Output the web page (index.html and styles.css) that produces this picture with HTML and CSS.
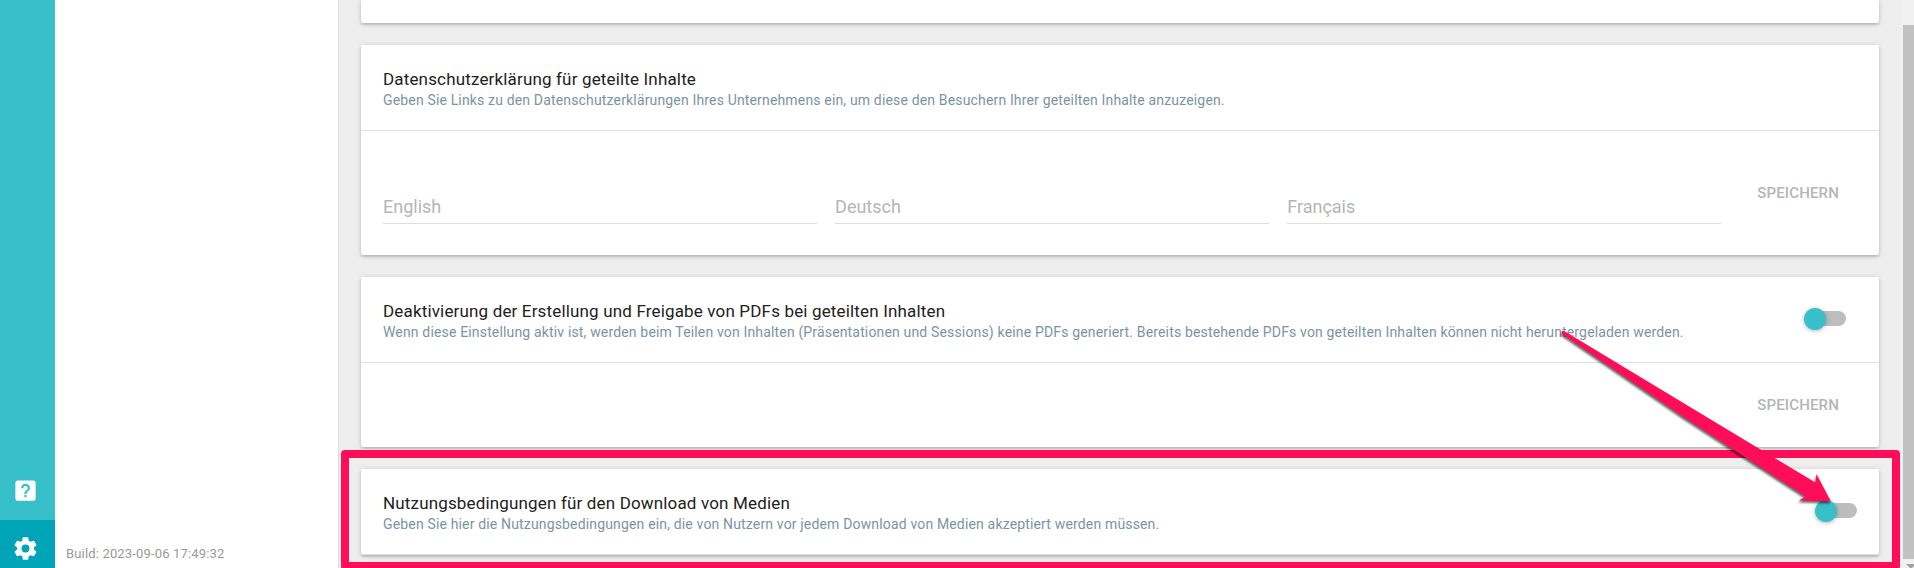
FILE: index.html
```html
<!DOCTYPE html>
<html lang="de">
<head>
<meta charset="utf-8">
<meta name="viewport" content="width=device-width, initial-scale=1">
<title>Einstellungen</title>
<link rel="stylesheet" href="styles.css">
</head>
<body>
<div class="app">
  <nav class="rail">
    <a class="rail-item" href="#hilfe" aria-label="Hilfe">
      <svg class="rail-icon" viewBox="0 0 24 24" aria-hidden="true"><path fill="currentColor" d="M11 18h2v-2h-2v2m1-12a4 4 0 0 0-4 4h2a2 2 0 0 1 2-2 2 2 0 0 1 2 2c0 2-3 1.750-3 5h2c0-2.250 3-2.500 3-5a4 4 0 0 0-4-4M5 3h14a2 2 0 0 1 2 2v14a2 2 0 0 1-2 2H5a2 2 0 0 1-2-2V5a2 2 0 0 1 2-2z" fill-rule="evenodd"/></svg>
    </a>
    <a class="rail-item rail-item-active" href="#einstellungen" aria-label="Einstellungen">
      <svg class="rail-icon" viewBox="0 0 24 24" aria-hidden="true"><path fill="currentColor" d="M12 15.500A3.500 3.500 0 0 1 8.500 12 3.500 3.500 0 0 1 12 8.500a3.500 3.500 0 0 1 3.500 3.500 3.500 3.500 0 0 1-3.500 3.500m7.430-2.530c.04-.32.07-.64.07-.97s-.03-.66-.07-1l2.110-1.630c.19-.15.24-.42.12-.64l-2-3.460c-.12-.22-.39-.31-.61-.22l-2.490 1c-.52-.39-1.060-.73-1.690-.98l-.37-2.650A.506.506 0 0 0 14 2h-4c-.25 0-.46.18-.5.42l-.37 2.650c-.63.25-1.170.59-1.690.98l-2.490-1c-.22-.09-.49 0-.61.22l-2 3.460c-.13.22-.07.49.12.64L4.570 11c-.04.34-.07.67-.07 1s.03.65.07.97l-2.110 1.660c-.19.15-.25.42-.12.64l2 3.460c.12.22.39.3.61.22l2.490-1.010c.52.4 1.060.74 1.690.99l.37 2.650c.04.24.25.42.5.42h4c.25 0 .46-.18.5-.42l.37-2.650c.63-.26 1.170-.59 1.690-.99l2.490 1.010c.22.08.49 0 .61-.22l2-3.460c.12-.22.07-.49-.12-.64l-2.110-1.660z"/></svg>
    </a>
  </nav>
  <aside class="panel">
    <p class="build">Build: 2023-09-06 17:49:32</p>
  </aside>
  <main class="content">
    <section class="card card-cut"></section>

    <section class="card">
      <header class="card-head">
        <div class="card-text">
          <h2 class="card-title">Datenschutzerklärung für geteilte Inhalte</h2>
          <p class="card-note">Geben Sie Links zu den Datenschutzerklärungen Ihres Unternehmens ein, um diese den Besuchern Ihrer geteilten Inhalte anzuzeigen.</p>
        </div>
      </header>
      <form class="card-body card-form">
        <div class="fields">
          <input class="field" type="text" placeholder="English" aria-label="English">
          <input class="field" type="text" placeholder="Deutsch" aria-label="Deutsch">
          <input class="field" type="text" placeholder="Français" aria-label="Français">
        </div>
        <button class="save" type="button" disabled>SPEICHERN</button>
      </form>
    </section>

    <section class="card">
      <header class="card-head">
        <div class="card-text">
          <h2 class="card-title" id="pdf-title">Deaktivierung der Erstellung und Freigabe von PDFs bei geteilten Inhalten</h2>
          <p class="card-note">Wenn diese Einstellung aktiv ist, werden beim Teilen von Inhalten (Präsentationen und Sessions) keine PDFs generiert. Bereits bestehende PDFs von geteilten Inhalten können nicht heruntergeladen werden.</p>
        </div>
        <input class="switch switch-inset" type="checkbox" role="switch" aria-labelledby="pdf-title">
      </header>
      <div class="card-body">
        <button class="save" type="button" disabled>SPEICHERN</button>
      </div>
    </section>

    <section class="card card-marked">
      <header class="card-head">
        <div class="card-text">
          <h2 class="card-title" id="terms-title">Nutzungsbedingungen für den Download von Medien</h2>
          <p class="card-note">Geben Sie hier die Nutzungsbedingungen ein, die von Nutzern vor jedem Download von Medien akzeptiert werden müssen.</p>
        </div>
        <input class="switch" type="checkbox" role="switch" aria-labelledby="terms-title">
      </header>
      <div class="marker"></div>
      <svg class="arrow" viewBox="0 0 285 185" aria-hidden="true"><path fill="#ff0d58" d="M6.500 8.500L7 6 10 6.500 140 85 260.500 157.500 261.500 149 276 176.500 244 175.500 250.500 171.500 130 93z"/></svg>
    </section>
  </main>
  <div class="scrollbar" aria-hidden="true">
    <div class="scroll-thumb"></div>
    <svg class="scroll-arrow" viewBox="0 0 11 9"><path fill="#a3a3a3" d="M3 5h10l-5 5z"/></svg>
  </div>
</div>
</body>
</html>
```
FILE: styles.css
```css
* {
  box-sizing: border-box;
}

body {
  margin: 0;
  font-family: Roboto, "Liberation Sans", sans-serif;
  letter-spacing: 0.01em;
  color: #212121;
}

h2,
p {
  margin: 0;
  font-weight: 400;
}

.app {
  display: flex;
  height: 100vh;
  overflow: hidden;
  background: #eeeeee;
}

.rail {
  display: flex;
  flex-direction: column;
  justify-content: flex-end;
  flex: 0 0 55px;
  margin-bottom: -10px;
  background: #37c0ca;
}

.rail-item {
  display: flex;
  align-items: center;
  justify-content: center;
  height: 58px;
  padding: 0 5px 1px 0;
  color: #ffffff;
}

.rail-item-active {
  background: #00a4b8;
}

.rail-icon {
  width: 27px;
  height: 27px;
}

.panel {
  display: flex;
  align-items: flex-end;
  flex: 0 0 284px;
  padding: 0 11px 5px;
  background: #ffffff;
  border-right: 1px solid #dddddd;
}

.build {
  font-size: 13px;
  line-height: 18px;
  color: #999999;
}

.content {
  display: flex;
  flex-direction: column;
  gap: 22px;
  flex: 1;
  min-width: 0;
  padding: 0 22px;
}

.card {
  flex: none;
  background: #ffffff;
  border-radius: 2px;
  box-shadow: 0 1px 5px rgba(0, 0, 0, 0.2), 0 2px 2px rgba(0, 0, 0, 0.1);
}

.card-cut {
  height: 23px;
}

.card-marked {
  position: relative;
}

.card-head {
  display: flex;
  align-items: center;
  justify-content: space-between;
  min-height: 86px;
  padding: 0 22px 2px;
  border-bottom: 1px solid #dddddd;
}

.card-text {
  padding-top: 4px;
}

.card-title {
  font-size: 17px;
  line-height: 22px;
}

.card-note {
  font-size: 14px;
  line-height: 20px;
  color: #7c949f;
}

.card-body {
  display: flex;
  align-items: center;
  justify-content: flex-end;
  min-height: 84px;
  padding: 0 33px 0 22px;
}

.card-form {
  min-height: 124px;
}

.fields {
  display: flex;
  flex: 1;
  gap: 18px;
  padding: 28px 29px 0 0;
}

.field {
  flex: 1;
  min-width: 0;
  height: 33px;
  padding: 0;
  font-family: inherit;
  font-size: 18px;
  line-height: 24px;
  color: #212121;
  background: none;
  border: 0;
  border-bottom: 1px solid #dddddd;
  outline: 0;
}

.field::placeholder {
  color: #b5b5b5;
  opacity: 1;
}

.save {
  height: 40px;
  padding: 0 7px;
  font-family: inherit;
  font-size: 15px;
  font-weight: 500;
  letter-spacing: 0.01em;
  color: #b5b5b5;
  background: none;
  border: 0;
}

.switch {
  appearance: none;
  display: flex;
  align-items: center;
  width: 42px;
  height: 15px;
  margin: 0;
  background: linear-gradient(#bdbdbd, #bdbdbd) right / 38px 15px no-repeat;
  border-radius: 8px;
}

.switch::before {
  content: "";
  flex: none;
  width: 22px;
  height: 22px;
  background: #37c0ca;
  border-radius: 50%;
  box-shadow: 0 1px 4px rgba(0, 0, 0, 0.3);
}

.switch-inset {
  margin-right: 11px;
}

.marker {
  position: absolute;
  inset: -19px -21px -15px -20px;
  border: 8px solid #ff0d58;
  border-radius: 4px;
}

.arrow {
  position: absolute;
  top: -144px;
  right: 39px;
  width: 285px;
  height: 185px;
  filter: drop-shadow(-1px 2px 1px rgba(0, 0, 0, 0.6));
}

.scrollbar {
  display: flex;
  flex-direction: column;
  flex: 0 0 13px;
  padding: 25px 0 0 2px;
  background: #f1f1f1;
}

.scroll-thumb {
  flex: 1;
  background: #c1c1c1;
}

.scroll-arrow {
  display: block;
  width: 11px;
  height: 9px;
}
```
